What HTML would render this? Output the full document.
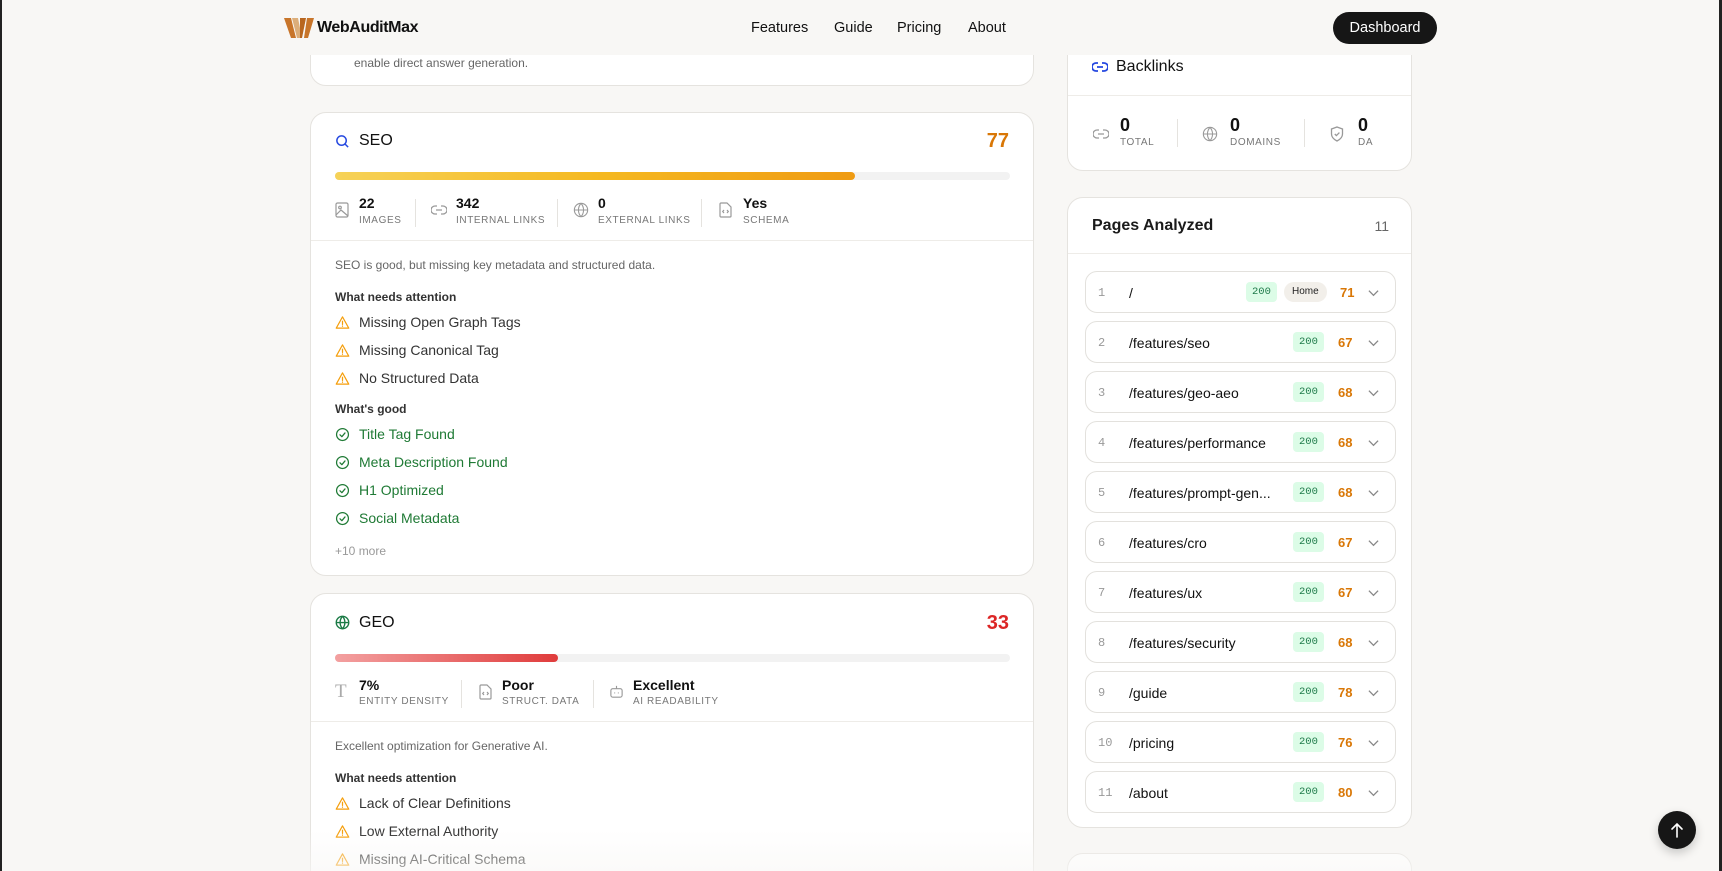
<!DOCTYPE html>
<html><head><meta charset="utf-8"><style>
*{box-sizing:border-box;margin:0;padding:0}
html,body{width:1722px;height:871px;overflow:hidden}
body{background:#f8f7f5;font-family:"Liberation Sans",sans-serif;color:#111;position:relative}
.abs{position:absolute}
.card{position:absolute;background:#fff;border:1px solid #e5e3df;border-radius:16px;overflow:hidden}
.t{position:absolute;white-space:nowrap}
.sep{position:absolute;left:0;right:0;height:1px;background:#eeece8}
.vd{position:absolute;width:1px;height:28px;background:#e5e3df}
.val{font-size:14px;font-weight:bold}
.bval{font-size:18px;font-weight:bold}
.lbl{font-size:10px;letter-spacing:.6px;color:#777}
.it{font-size:14px;color:#333}
.gd{font-size:14px;color:#1f7a35}
.hd{font-size:12px;font-weight:bold;color:#333}
.ic{position:absolute}
.row{position:absolute;left:17px;width:311px;height:42px;border:1px solid #e3e1dd;border-radius:12px;background:#fff}
.row .n{position:absolute;left:12px;top:14px;font-size:12px;color:#999;font-family:"Liberation Mono",monospace}
.row .p{position:absolute;left:43px;top:13px;font-size:14px;color:#111}
.row .b{position:absolute;left:207px;top:10px;height:20px;line-height:20px;padding:0 6px;background:#dcfce7;color:#1f7a4a;font-size:10.5px;border-radius:4px;font-family:"Liberation Mono",monospace}
.row .h{position:absolute;left:198px;top:10px;height:20px;line-height:20px;padding:0 8px;background:#f2efea;color:#222;font-size:10px;border-radius:10px}
.row .s{position:absolute;left:252px;top:13px;font-size:13px;font-weight:bold;color:#d97706}
.row svg{position:absolute;left:282px;top:17px}
</style></head><body>
<svg width="0" height="0" style="position:absolute"><defs>
<symbol id="warn" viewBox="0 0 24 24"><path d="M12 3L2 21h20z" fill="none" stroke="#f59e0b" stroke-width="2" stroke-linejoin="round"/><path d="M12 10v5M12 17.5v.5" stroke="#f59e0b" stroke-width="2" stroke-linecap="round"/></symbol>
<symbol id="ok" viewBox="0 0 24 24"><circle cx="12" cy="12" r="9.5" fill="none" stroke="#1f7a35" stroke-width="2"/><path d="M8 12.5l3 3 5-6" fill="none" stroke="#1f7a35" stroke-width="2" stroke-linecap="round" stroke-linejoin="round"/></symbol>
<symbol id="chev" viewBox="0 0 12 8"><path d="M1 1.5l5 5 5-5" fill="none" stroke="#888" stroke-width="1.4"/></symbol>
</defs></svg>

<div class="abs" style="left:0;top:0;width:2px;height:871px;background:#222;z-index:9"></div>
<div class="abs" style="right:0;top:0;width:3px;height:871px;background:#222;z-index:9"></div>

<div class="card" style="left:310px;top:-20px;width:724px;height:106px">
<div class="t" style="left:43px;top:75px;font-size:12px;color:#666">enable direct answer generation.</div>
</div>

<div class="abs" style="left:0;top:0;width:1722px;height:55px;background:#f8f7f5;z-index:5">
<svg class="abs" style="left:284px;top:18px" width="30" height="20" viewBox="0 0 30 20"><path d="M0 0h7l5 20H7z" fill="#c8752a"/><path d="M8 0h6l4 20h-5z" fill="#dcae7a"/><path d="M16 0h6l-4 20h-2z" fill="#b8661f"/><path d="M23 0h7l-6 20h-4z" fill="#c8752a"/></svg>
<div class="t" style="left:317px;top:19px;font-size:16px;font-weight:bold;letter-spacing:-.4px">WebAuditMax</div>
<div class="t" style="left:751px;top:20px;font-size:14.5px">Features</div>
<div class="t" style="left:834px;top:20px;font-size:14.5px">Guide</div>
<div class="t" style="left:897px;top:20px;font-size:14.5px">Pricing</div>
<div class="t" style="left:968px;top:20px;font-size:14.5px">About</div>
<div class="abs" style="left:1333px;top:12px;width:104px;height:32px;background:#161616;border-radius:16px;color:#fff;font-size:14.5px;text-align:center;line-height:32px">Dashboard</div>
</div>

<!-- SEO -->
<div class="card" style="left:310px;top:112px;width:724px;height:464px">
<svg class="abs" style="left:24px;top:21px" width="15" height="15" viewBox="0 0 24 24" fill="none" stroke="#2548e0" stroke-width="2.4"><circle cx="10.5" cy="10.5" r="7.5"/><path d="M16 16l5 5"/></svg>
<div class="t" style="left:48px;top:19px;font-size:16px">SEO</div>
<div class="t" style="right:24px;top:17px;font-size:20px;font-weight:bold;color:#d97706">77</div>
<div class="abs" style="left:24px;top:59px;width:675px;height:8px;border-radius:4px;background:#f2f2f2"></div>
<div class="abs" style="left:24px;top:59px;width:520px;height:8px;border-radius:4px;background:linear-gradient(90deg,#f6d258,#f5b921 50%,#ef9b13)"></div>
<svg class="abs" style="left:24px;top:89px" width="14" height="16" viewBox="0 0 14 16" fill="none" stroke="#999" stroke-width="1.2"><rect x="1" y="1" width="12" height="14" rx="1.5"/><circle cx="5" cy="5.5" r="1.3"/><path d="M1 13l5-5 7 6"/></svg>
<div class="t val" style="left:48px;top:82px">22</div><div class="t lbl" style="left:48px;top:102px">IMAGES</div>
<div class="vd" style="left:104px;top:86px"></div>
<svg class="abs" style="left:120px;top:91px" width="16" height="12" viewBox="0 0 16 12" fill="none" stroke="#999" stroke-width="1.3"><path d="M6 2H4a4 4 0 000 8h2M10 2h2a4 4 0 010 8h-2M5 6h6"/></svg>
<div class="t val" style="left:145px;top:82px">342</div><div class="t lbl" style="left:145px;top:102px">INTERNAL LINKS</div>
<div class="vd" style="left:246px;top:86px"></div>
<svg class="abs" style="left:262px;top:89px" width="16" height="16" viewBox="0 0 24 24" fill="none" stroke="#999" stroke-width="1.6"><circle cx="12" cy="12" r="10"/><path d="M2 12h20M12 2a15 15 0 010 20M12 2a15 15 0 000 20"/></svg>
<div class="t val" style="left:287px;top:82px">0</div><div class="t lbl" style="left:287px;top:102px">EXTERNAL LINKS</div>
<div class="vd" style="left:390px;top:86px"></div>
<svg class="abs" style="left:408px;top:89px" width="13" height="16" viewBox="0 0 13 16" fill="none" stroke="#999" stroke-width="1.2"><path d="M1 2a1 1 0 011-1h6l4 4v9a1 1 0 01-1 1H2a1 1 0 01-1-1z"/><path d="M5 8l-1.3 1.5L5 11M8 8l1.3 1.5L8 11"/></svg>
<div class="t val" style="left:432px;top:82px">Yes</div><div class="t lbl" style="left:432px;top:102px">SCHEMA</div>
<div class="sep" style="top:127px"></div>
<div class="t" style="left:24px;top:145px;font-size:12px;color:#666">SEO is good, but missing key metadata and structured data.</div>
<div class="t hd" style="left:24px;top:177px">What needs attention</div>
<svg class="ic" style="left:24px;top:202px" width="15" height="15"><use href="#warn"/></svg><div class="t it" style="left:48px;top:201px">Missing Open Graph Tags</div>
<svg class="ic" style="left:24px;top:230px" width="15" height="15"><use href="#warn"/></svg><div class="t it" style="left:48px;top:229px">Missing Canonical Tag</div>
<svg class="ic" style="left:24px;top:258px" width="15" height="15"><use href="#warn"/></svg><div class="t it" style="left:48px;top:257px">No Structured Data</div>
<div class="t hd" style="left:24px;top:289px">What's good</div>
<svg class="ic" style="left:24px;top:314px" width="15" height="15"><use href="#ok"/></svg><div class="t gd" style="left:48px;top:313px">Title Tag Found</div>
<svg class="ic" style="left:24px;top:342px" width="15" height="15"><use href="#ok"/></svg><div class="t gd" style="left:48px;top:341px">Meta Description Found</div>
<svg class="ic" style="left:24px;top:370px" width="15" height="15"><use href="#ok"/></svg><div class="t gd" style="left:48px;top:369px">H1 Optimized</div>
<svg class="ic" style="left:24px;top:398px" width="15" height="15"><use href="#ok"/></svg><div class="t gd" style="left:48px;top:397px">Social Metadata</div>
<div class="t" style="left:24px;top:431px;font-size:12px;color:#999">+10 more</div>
</div>

<!-- GEO -->
<div class="card" style="left:310px;top:593px;width:724px;height:300px">
<svg class="abs" style="left:24px;top:21px" width="15" height="15" viewBox="0 0 24 24" fill="none" stroke="#1a7a45" stroke-width="2.2"><circle cx="12" cy="12" r="10"/><path d="M2 12h20M12 2a15 15 0 010 20M12 2a15 15 0 000 20"/></svg>
<div class="t" style="left:48px;top:20px;font-size:16px">GEO</div>
<div class="t" style="right:24px;top:18px;font-size:20px;font-weight:bold;color:#dc2626">33</div>
<div class="abs" style="left:24px;top:60px;width:675px;height:8px;border-radius:4px;background:#f2f2f2"></div>
<div class="abs" style="left:24px;top:60px;width:223px;height:8px;border-radius:4px;background:linear-gradient(90deg,#f3a0a0,#e03c3c)"></div>
<div class="t" style="left:24px;top:87px;font-size:19px;color:#aaa;font-family:'Liberation Serif',serif">T</div>
<div class="t val" style="left:48px;top:83px">7%</div><div class="t lbl" style="left:48px;top:102px">ENTITY DENSITY</div>
<div class="vd" style="left:150px;top:86px"></div>
<svg class="abs" style="left:168px;top:90px" width="13" height="16" viewBox="0 0 13 16" fill="none" stroke="#999" stroke-width="1.2"><path d="M1 2a1 1 0 011-1h6l4 4v9a1 1 0 01-1 1H2a1 1 0 01-1-1z"/><path d="M5 8l-1.3 1.5L5 11M8 8l1.3 1.5L8 11"/></svg>
<div class="t val" style="left:191px;top:83px">Poor</div><div class="t lbl" style="left:191px;top:102px">STRUCT. DATA</div>
<div class="vd" style="left:282px;top:86px"></div>
<svg class="abs" style="left:298px;top:90px" width="15" height="15" viewBox="0 0 16 16" fill="none" stroke="#999" stroke-width="1.2"><rect x="2" y="5" width="12" height="9" rx="2"/><path d="M8 5V2M6 9v1M10 9v1"/></svg>
<div class="t val" style="left:322px;top:83px">Excellent</div><div class="t lbl" style="left:322px;top:102px">AI READABILITY</div>
<div class="sep" style="top:127px"></div>
<div class="t" style="left:24px;top:145px;font-size:12px;color:#666">Excellent optimization for Generative AI.</div>
<div class="t hd" style="left:24px;top:177px">What needs attention</div>
<svg class="ic" style="left:24px;top:202px" width="15" height="15"><use href="#warn"/></svg><div class="t it" style="left:48px;top:201px">Lack of Clear Definitions</div>
<svg class="ic" style="left:24px;top:230px" width="15" height="15"><use href="#warn"/></svg><div class="t it" style="left:48px;top:229px">Low External Authority</div>
<svg class="ic" style="left:24px;top:258px" width="15" height="15"><use href="#warn"/></svg><div class="t it" style="left:48px;top:257px">Missing AI-Critical Schema</div>
</div>

<!-- Backlinks -->
<div class="card" style="left:1067px;top:-20px;width:345px;height:191px">
<svg class="abs" style="left:24px;top:80px" width="16" height="12" viewBox="0 0 16 12" fill="none" stroke="#2548e0" stroke-width="1.8"><path d="M6 2H4a4 4 0 000 8h2M10 2h2a4 4 0 010 8h-2M5 6h6"/></svg>
<div class="t" style="left:48px;top:77px;font-size:16px;font-weight:500">Backlinks</div>
<div class="sep" style="top:114px"></div>
<svg class="abs" style="left:25px;top:147px" width="16" height="12" viewBox="0 0 16 12" fill="none" stroke="#999" stroke-width="1.3"><path d="M6 2H4a4 4 0 000 8h2M10 2h2a4 4 0 010 8h-2M5 6h6"/></svg>
<div class="t bval" style="left:52px;top:134px">0</div><div class="t lbl" style="left:52px;top:156px">TOTAL</div>
<div class="vd" style="left:109px;top:138px"></div>
<svg class="abs" style="left:134px;top:145px" width="16" height="16" viewBox="0 0 24 24" fill="none" stroke="#999" stroke-width="1.6"><circle cx="12" cy="12" r="10"/><path d="M2 12h20M12 2a15 15 0 010 20M12 2a15 15 0 000 20"/></svg>
<div class="t bval" style="left:162px;top:134px">0</div><div class="t lbl" style="left:162px;top:156px">DOMAINS</div>
<div class="vd" style="left:236px;top:138px"></div>
<svg class="abs" style="left:262px;top:145px" width="14" height="16" viewBox="0 0 14 16" fill="none" stroke="#999" stroke-width="1.3"><path d="M7 1l5.5 2v5c0 3.5-2.5 5.5-5.5 7-3-1.5-5.5-3.5-5.5-7V3z"/><path d="M4.8 8l1.6 1.6L9.4 6.6"/></svg>
<div class="t bval" style="left:290px;top:134px">0</div><div class="t lbl" style="left:290px;top:156px">DA</div>
</div>

<!-- Pages Analyzed -->
<div class="card" style="left:1067px;top:197px;width:345px;height:631px">
<div class="t" style="left:24px;top:19px;font-size:16px;font-weight:bold;color:#1a1a1a">Pages Analyzed</div>
<div class="t" style="right:22px;top:20px;font-size:14px;color:#666">11</div>
<div class="sep" style="top:55px"></div>
<div class="row" style="top:73px"><span class="n">1</span><span class="p">/</span><span class="b" style="left:160px">200</span><span class="h">Home</span><span class="s" style="left:254px">71</span><svg width="11" height="8"><use href="#chev"/></svg></div>
<div class="row" style="top:123px"><span class="n">2</span><span class="p">/features/seo</span><span class="b">200</span><span class="s">67</span><svg width="11" height="8"><use href="#chev"/></svg></div>
<div class="row" style="top:173px"><span class="n">3</span><span class="p">/features/geo-aeo</span><span class="b">200</span><span class="s">68</span><svg width="11" height="8"><use href="#chev"/></svg></div>
<div class="row" style="top:223px"><span class="n">4</span><span class="p">/features/performance</span><span class="b">200</span><span class="s">68</span><svg width="11" height="8"><use href="#chev"/></svg></div>
<div class="row" style="top:273px"><span class="n">5</span><span class="p">/features/prompt-gen...</span><span class="b">200</span><span class="s">68</span><svg width="11" height="8"><use href="#chev"/></svg></div>
<div class="row" style="top:323px"><span class="n">6</span><span class="p">/features/cro</span><span class="b">200</span><span class="s">67</span><svg width="11" height="8"><use href="#chev"/></svg></div>
<div class="row" style="top:373px"><span class="n">7</span><span class="p">/features/ux</span><span class="b">200</span><span class="s">67</span><svg width="11" height="8"><use href="#chev"/></svg></div>
<div class="row" style="top:423px"><span class="n">8</span><span class="p">/features/security</span><span class="b">200</span><span class="s">68</span><svg width="11" height="8"><use href="#chev"/></svg></div>
<div class="row" style="top:473px"><span class="n">9</span><span class="p">/guide</span><span class="b">200</span><span class="s">78</span><svg width="11" height="8"><use href="#chev"/></svg></div>
<div class="row" style="top:523px"><span class="n">10</span><span class="p">/pricing</span><span class="b">200</span><span class="s">76</span><svg width="11" height="8"><use href="#chev"/></svg></div>
<div class="row" style="top:573px"><span class="n">11</span><span class="p">/about</span><span class="b">200</span><span class="s">80</span><svg width="11" height="8"><use href="#chev"/></svg></div>
</div>

<div class="card" style="left:1067px;top:853px;width:345px;height:60px"></div>

<div class="abs" style="left:0;top:830px;width:1722px;height:41px;background:linear-gradient(rgba(248,247,245,0),rgba(248,247,245,.6));z-index:3"></div>

<div class="abs" style="left:1658px;top:811px;width:38px;height:38px;border-radius:50%;background:#161616;box-shadow:0 4px 10px rgba(0,0,0,.2);z-index:6">
<svg class="abs" style="left:12px;top:11px" width="14" height="16" viewBox="0 0 14 16" fill="none" stroke="#fff" stroke-width="1.6" stroke-linecap="round"><path d="M7 15V2M2 7l5-5 5 5"/></svg>
</div>
</body></html>
